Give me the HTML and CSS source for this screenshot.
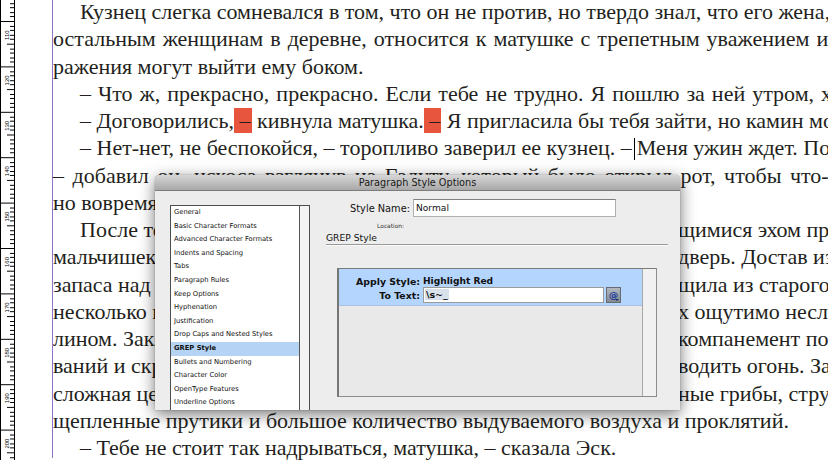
FILE: index.html
```html
<!DOCTYPE html>
<html lang="ru">
<head>
<meta charset="utf-8">
<title>Paragraph Style Options</title>
<link rel="stylesheet" href="styles.css">
</head>
<body>
<div class="app">
  <div class="ruler">
    <svg width="13" height="460" viewBox="0 0 13 460">
      <defs>
        <pattern id="ticks" x="0" y="21" width="13" height="45.4" patternUnits="userSpaceOnUse">
          <path d="M0 0.5H13M9 5.04H13M9 9.58H13M9 14.12H13M9 18.66H13M6 23.2H13M9 27.74H13M9 32.28H13M9 36.82H13M9 41.36H13" stroke="#000" stroke-width="1" shape-rendering="crispEdges"/>
        </pattern>
      </defs>
      <rect width="13" height="460" fill="url(#ticks)"/>
      <g class="ruler-num">
        <text transform="translate(7.5,40) rotate(-90)">110</text>
        <text transform="translate(7.5,85.4) rotate(-90)">120</text>
        <text transform="translate(7.5,130.8) rotate(-90)">130</text>
        <text transform="translate(7.5,176.2) rotate(-90)">140</text>
        <text transform="translate(7.5,221.6) rotate(-90)">150</text>
        <text transform="translate(7.5,267) rotate(-90)">160</text>
        <text transform="translate(7.5,312.4) rotate(-90)">170</text>
        <text transform="translate(7.5,357.8) rotate(-90)">180</text>
        <text transform="translate(7.5,403.2) rotate(-90)">190</text>
        <text transform="translate(7.5,448.6) rotate(-90)">200</text>
      </g>
    </svg>
  </div>
  <div class="page">
    <div class="column">
      <div class="text">
        <div class="line ind">Кузнец слегка сомневался в том, что он не против, но твердо знал, что его жена, как</div>
        <div class="line j1">остальным женщинам в деревне, относится к матушке с трепетным уважением и</div>
        <div class="line">ражения могут выйти ему боком.</div>
        <div class="line ind j1">– Что ж, прекрасно, прекрасно. Если тебе не трудно. Я пошлю за ней утром, хорошо?</div>
        <div class="line ind">– Договорились,<span class="hl"> –</span> кивнула матушка.<span class="hl"> –</span> Я пригласила бы тебя зайти, но камин мой</div>
        <div class="line ind">– Нет-нет, не беспокойся, – торопливо заверил ее кузнец. –<span class="caret"></span>Меня ужин ждет. Пока,</div>
        <div class="line j7">– добавил он, искоса взглянув на Галуту, который было открыл рот, чтобы что-то</div>
        <div class="line">но вовремя прикусил язык.</div>
        <div class="line ind"><span class="under">После того как кузнец ушел, матушка проводила взглядом шаги, отдаю</span>щимися эхом про</div>
        <div class="line"><span class="under">мальчишек, и матушка Ветровоск плотно закрыла за ними тяжелую </span>дверь. Достав из</div>
        <div class="line"><span class="under">запаса над очагом несколько поленьев и лучину, она выта</span>щила из старого</div>
        <div class="line"><span class="under">несколько горстей сухого мха и березовой коры, от которы</span>х ощутимо несло</div>
        <div class="line"><span class="under">лином. Заклинаний не требовалось, но в сопровождении ак</span>компанемент по</div>
        <div class="line"><span class="under">ваний и скрежета кремня она принялась раз</span>водить огонь. За</div>
        <div class="line"><span class="under">сложная церемония, в которой участвовали суше</span>ные грибы, стру</div>
        <div class="line">щепленные прутики и большое количество выдуваемого воздуха и проклятий.</div>
        <div class="line ind">– Тебе не стоит так надрываться, матушка, – сказала Эск.</div>
      </div>
    </div>
  </div>
</div>

<div class="dialog">
  <div class="titlebar">Paragraph Style Options</div>
  <div class="dlg-body">
    <div class="left">
      <div class="list">
        <ul class="items">
          <li>General</li>
          <li>Basic Character Formats</li>
          <li>Advanced Character Formats</li>
          <li>Indents and Spacing</li>
          <li>Tabs</li>
          <li>Paragraph Rules</li>
          <li>Keep Options</li>
          <li>Hyphenation</li>
          <li>Justification</li>
          <li>Drop Caps and Nested Styles</li>
          <li class="sel">GREP Style</li>
          <li>Bullets and Numbering</li>
          <li>Character Color</li>
          <li>OpenType Features</li>
          <li>Underline Options</li>
        </ul>
        <div class="track"></div>
      </div>
    </div>
    <div class="right">
      <div class="name-row">
        <span class="name-label">Style Name:</span>
        <span class="name-input">Normal</span>
      </div>
      <div class="loc-row"><span class="loc-label">Location:</span></div>
      <div class="grep-head">GREP Style</div>
      <div class="panel">
        <div class="panel-main">
          <div class="rule">
            <div class="rule-row">
              <span class="rule-label">Apply Style:</span>
              <span class="rule-value">Highlight Red</span>
            </div>
            <div class="rule-row two">
              <span class="rule-label">To Text:</span>
              <span class="rule-input"><span class="selected">\s~_</span></span>
              <span class="at-btn">@<i class="at-arrow"></i></span>
            </div>
          </div>
        </div>
        <div class="panel-track"></div>
      </div>
    </div>
  </div>
</div>
</body>
</html>
```

FILE: styles.css
```css
* { box-sizing: border-box; }
html, body { margin: 0; padding: 0; }
body {
  width: 828px;
  height: 460px;
  overflow: hidden;
  background: #fff;
  position: relative;
}
.app { display: flex; height: 460px; }

.ruler {
  flex: none;
  width: 15px;
  height: 460px;
  border-left: 1px solid #000;
  border-right: 1px solid #000;
  background: #fff;
}
.ruler svg { display: block; }
.ruler-num { font-family: "Liberation Sans", sans-serif; font-size: 6px; fill: #000; }

.page { flex: 1; padding-left: 37px; overflow: hidden; }
.column { border-left: 1px solid #8f72cc; height: 100%; }
.text {
  font-family: "Liberation Serif", "Times New Roman", serif;
  font-size: 22px;
  line-height: 27.25px;
  color: #231f20;
  margin-top: -2px;
}
.line { white-space: nowrap; }
.ind { padding-left: 27px; }
.j1 { word-spacing: 1.5px; }
.j7 { word-spacing: 3px; }
.hl { background: #e8553f; padding-right: 1px; }
.caret {
  display: inline-block;
  width: 1px;
  height: 22px;
  background: #000;
  vertical-align: -5px;
  margin: 0 2px 0 2px;
}
.under {
  display: inline-block;
  vertical-align: top;
  overflow: hidden;
  width: 625px;
}
.ind .under { width: 598px; }

/* dialog */
.dialog {
  position: absolute;
  left: 155px;
  top: 175px;
  width: 525px;
  height: 235px;
  background: #ededed;
  border-radius: 5px 5px 0 0;
  box-shadow: 0 4px 16px rgba(0,0,0,.55), 0 0 1px rgba(0,0,0,.7);
  display: flex;
  flex-direction: column;
  font-family: "DejaVu Sans", "Liberation Sans", sans-serif;
  color: #111;
  overflow: hidden;
}
.titlebar {
  flex: none;
  height: 16px;
  background: linear-gradient(#d6d6d6, #a8a8a8);
  border-bottom: 1px solid #7c7c7c;
  text-align: center;
  font-size: 9.7px;
  line-height: 15px;
  color: #1a1a1a;
}
.dlg-body { flex: 1; display: flex; min-height: 0; }
.left { flex: none; padding: 14px 0 0 15px; }
.list {
  width: 140px;
  height: 100%;
  display: flex;
  background: #fff;
  border: 1px solid #4d4d4d;
  border-bottom: none;
}
.items {
  list-style: none;
  margin: 0;
  padding: 0;
  width: 128px;
  font-size: 6.75px;
}
.items li {
  height: 13.6px;
  line-height: 13.6px;
  padding-left: 3px;
  white-space: nowrap;
  color: #111;
}
.items li.sel { background: #b5d3f4; font-weight: bold; }
.track {
  flex: 1;
  border-left: 1px solid #555;
  background: #f3f3f3;
}

.right { flex: 1; padding-top: 8px; }
.name-row { display: flex; align-items: center; height: 18px; }
.name-label { width: 100px; text-align: right; font-size: 9.8px; }
.name-input {
  margin-left: 3px;
  width: 203px;
  height: 18px;
  background: #fff;
  border: 1px solid #b0b0b0;
  border-top-color: #808080;
  font-size: 9.1px;
  line-height: 16px;
  padding-left: 2px;
}
.loc-row { margin-top: 4px; height: 10px; }
.loc-label {
  display: block;
  width: 94px;
  text-align: right;
  font-size: 5.9px;
  line-height: 10px;
  color: #333;
}
.grep-head {
  margin: 1px 12px 0 16px;
  font-size: 9.2px;
  line-height: 11px;
  padding-bottom: 1px;
  border-bottom: 1px solid #9a9a9a;
  box-shadow: 0 1px 0 #fafafa;
}
.panel {
  margin: 23px 0 0 27px;
  width: 320px;
  height: 129px;
  display: flex;
  background: #e9e9e9;
  border: 1px solid #8c8c8c;
  border-left: 2px solid #767676;
  border-top-color: #7a7a7a;
}
.panel-main { flex: 1; }
.rule {
  height: 37px;
  background: #b4d5fd;
  border-bottom: 1px solid #a9c2e2;
  padding-top: 6px;
}
.rule-row { display: flex; align-items: center; height: 12px; }
.rule-row.two { height: 16px; }
.rule-label { width: 81px; text-align: right; font-size: 9.4px; font-weight: bold; }
.rule-value { margin-left: 3px; font-size: 9.1px; font-weight: bold; }
.rule-input {
  margin-left: 3px;
  width: 181px;
  height: 16px;
  background: #fff;
  border: 1px solid #9a9a9a;
  font-size: 9.5px;
  font-weight: bold;
  line-height: 14px;
  padding-left: 1px;
}
.selected { background: #d9e1ea; padding: 0 1px; }
.at-btn {
  position: relative;
  margin-left: 2px;
  width: 15px;
  height: 16px;
  background: linear-gradient(#b3b8bf, #848a93);
  border: 1px solid #676c74;
  color: #1c3d99;
  font-size: 9.5px;
  font-weight: bold;
  line-height: 14px;
  text-align: center;
}
.at-arrow {
  position: absolute;
  right: 1px;
  bottom: 1px;
  width: 0;
  height: 0;
  border-left: 2px solid transparent;
  border-right: 2px solid transparent;
  border-top: 2px solid #1b2f6b;
}
.panel-track {
  flex: none;
  width: 14px;
  border-left: 1px solid #a8a8a8;
  background: #f1f1f1;
}
```
